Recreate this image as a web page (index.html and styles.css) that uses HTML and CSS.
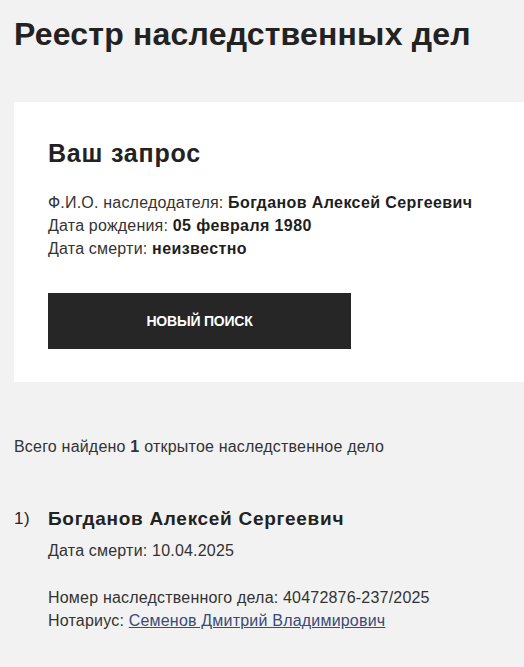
FILE: index.html
```html
<!DOCTYPE html>
<html lang="ru">
<head>
<meta charset="utf-8">
<title>Реестр наследственных дел</title>
<link rel="stylesheet" href="styles.css">
</head>
<body>
<main class="page">
  <h1 class="title">Реестр наследственных дел</h1>
  <section class="card">
    <h2 class="card-title">Ваш запрос</h2>
    <div class="query">
      <p>Ф.И.О. наследодателя: <b>Богданов Алексей Сергеевич</b></p>
      <p>Дата рождения: <b>05 февраля 1980</b></p>
      <p>Дата смерти: <b>неизвестно</b></p>
    </div>
    <button class="btn" type="button">НОВЫЙ ПОИСК</button>
  </section>
  <p class="summary">Всего найдено <b>1</b> открытое наследственное дело</p>
  <ol class="results">
    <li class="result">
      <span class="num">1)</span>
      <div class="result-body">
        <h3 class="result-name">Богданов Алексей Сергеевич</h3>
        <p>Дата смерти: 10.04.2025</p>
        <div class="result-meta">
          <p>Номер наследственного дела: 40472876-237/2025</p>
          <p>Нотариус: <a href="#" class="link">Семенов Дмитрий Владимирович</a></p>
        </div>
      </div>
    </li>
  </ol>
</main>
</body>
</html>
```

FILE: styles.css
```css
* { box-sizing: border-box; }
html, body { margin: 0; padding: 0; }
body {
  background: #f2f2f2;
  font-family: "Liberation Sans", Arial, sans-serif;
  color: #262626;
  font-size: 16px;
  line-height: 23px;
  letter-spacing: 0.2px;
}
b { letter-spacing: 0.4px; }
p { margin: 0; }
.page {
  padding: 14px 0 0 14px;
}
.title {
  margin: 0;
  font-size: 32px;
  line-height: 40px;
  font-weight: 700;
  letter-spacing: 0.2px;
  color: #222;
}
.card {
  margin-top: 48px;
  background: #fff;
  padding: 35px 34px 34px 34px;
  height: 280px;
}
.card-title {
  margin: 0;
  font-size: 25px;
  line-height: 32px;
  font-weight: 700;
  letter-spacing: 0.8px;
  color: #222;
}
.query {
  margin-top: 22px;
  color: #333;
}
.query b { color: #1e1e1e; }
.btn {
  margin-top: 33px;
  display: flex;
  align-items: center;
  justify-content: center;
  width: 303px;
  height: 56px;
  background: #262626;
  color: #fff;
  border: 0;
  font-family: inherit;
  font-weight: 700;
  font-size: 14px;
  letter-spacing: -0.2px;
}
.summary {
  margin-top: 53px;
  color: #333;
}
.results {
  list-style: none;
  margin: 47px 0 0 0;
  padding: 0;
}
.result {
  display: flex;
}
.num {
  width: 34px;
  font-size: 17px;
  line-height: 28px;
  letter-spacing: 0.5px;
}
.result-name {
  margin: 0;
  font-size: 19px;
  line-height: 28px;
  font-weight: 700;
  letter-spacing: 0.7px;
  color: #222;
}
.result-body p { color: #333; }
.result-body > p { margin-top: 6px; }
.result-meta { margin-top: 24px; }
.link {
  color: #3b4a78;
  text-decoration: underline;
}
```
